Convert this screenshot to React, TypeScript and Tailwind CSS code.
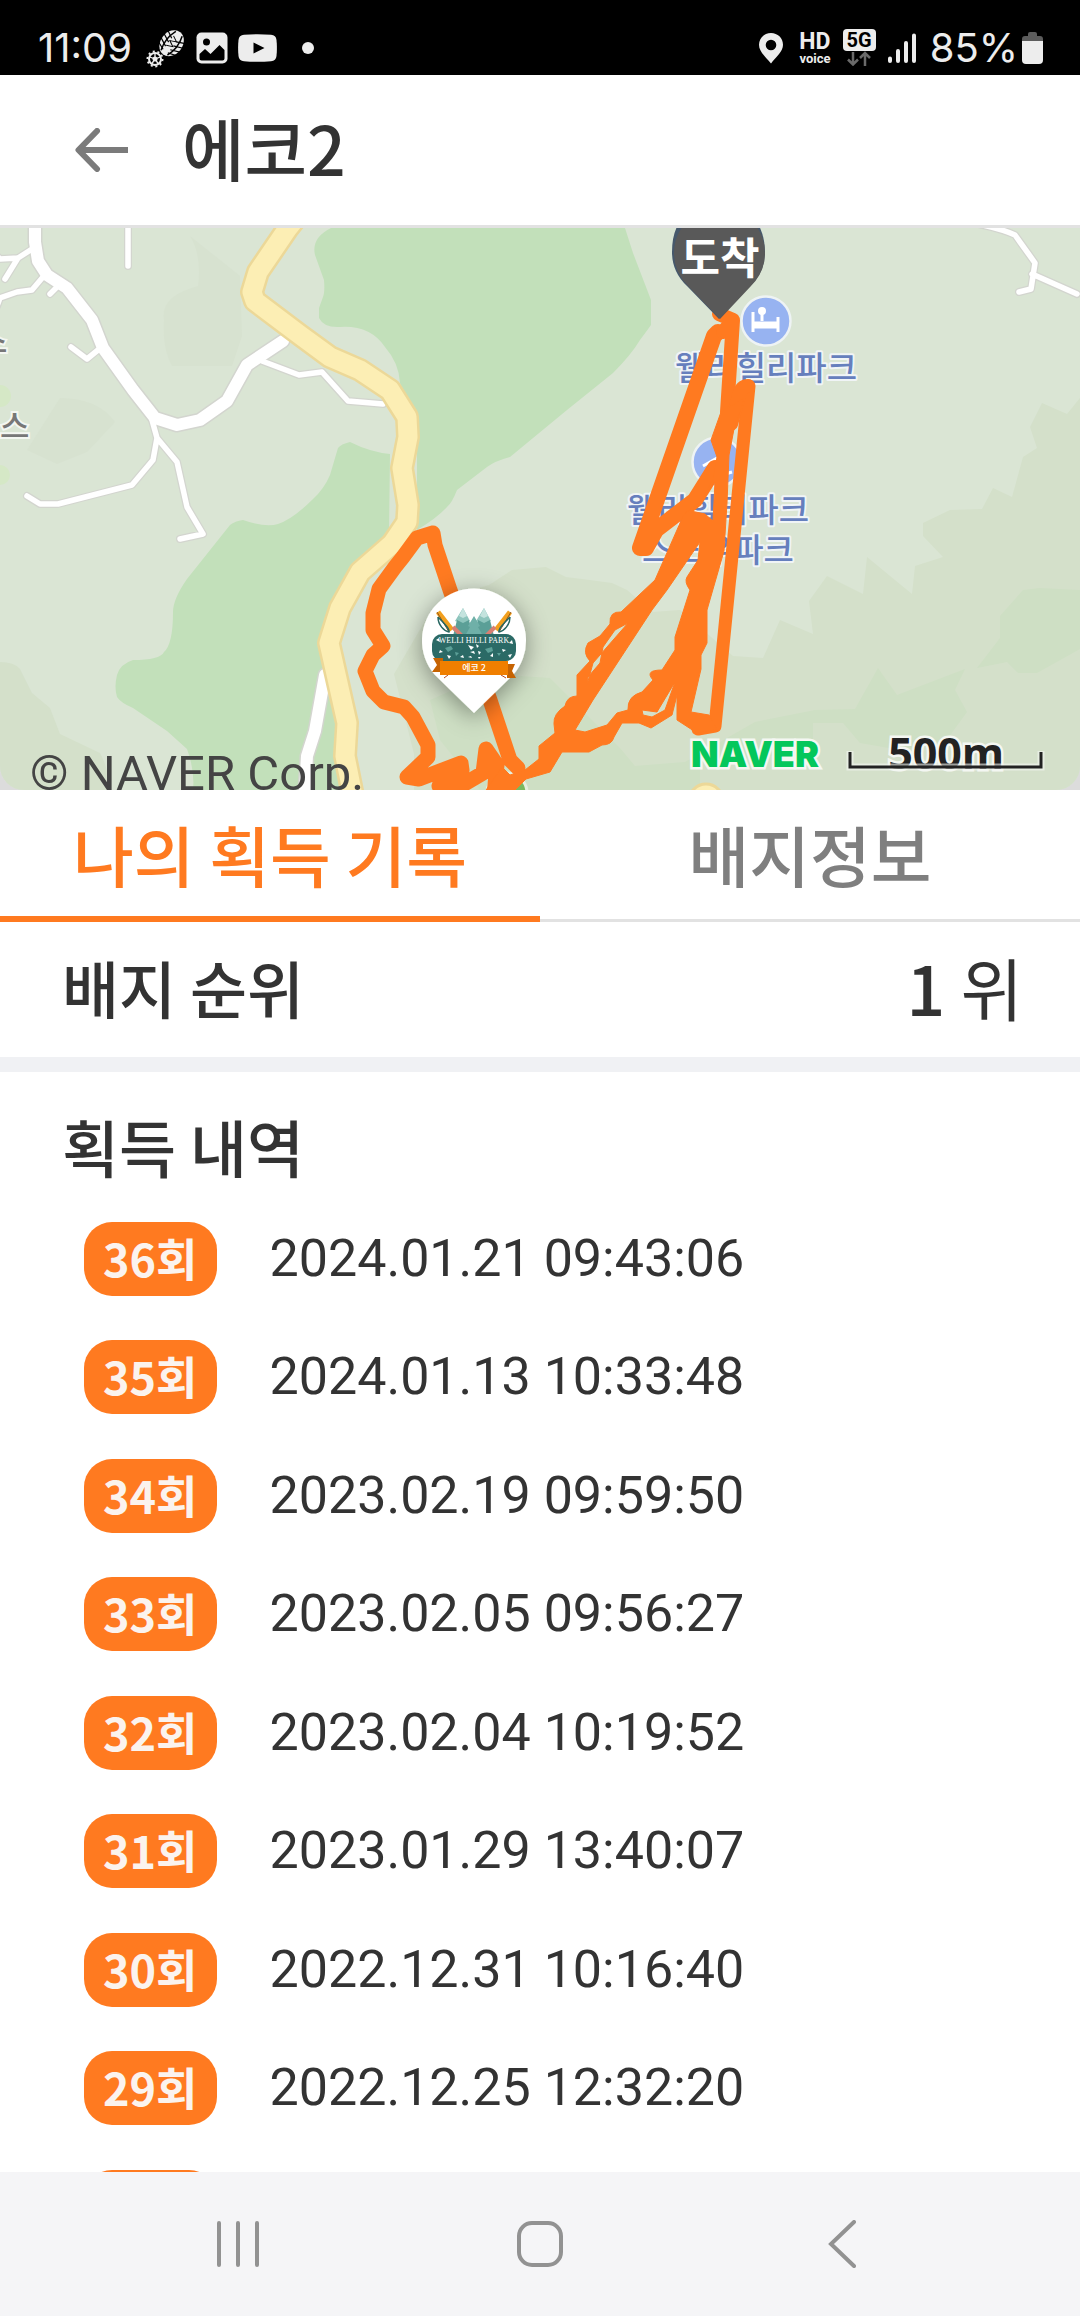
import React from 'react';

interface RecordItem {
  count: string;
  date: string;
}

const records: RecordItem[] = [
  { count: '36회', date: '2024.01.21 09:43:06' },
  { count: '35회', date: '2024.01.13 10:33:48' },
  { count: '34회', date: '2023.02.19 09:59:50' },
  { count: '33회', date: '2023.02.05 09:56:27' },
  { count: '32회', date: '2023.02.04 10:19:52' },
  { count: '31회', date: '2023.01.29 13:40:07' },
  { count: '30회', date: '2022.12.31 10:16:40' },
  { count: '29회', date: '2022.12.25 12:32:20' },
  { count: '28회', date: '' },
];

function StatusBar() {
  return (
    <div className="flex h-[75px] shrink-0 items-center justify-between bg-black pt-5 pr-[37px] pl-[38px] font-['Inter',sans-serif] text-[40px] leading-none text-[#ededed]">
      <div className="flex items-center">
        <span>11:09</span>
        {/* Shoe print and gear */}
        <svg className="ml-3.5 h-10 w-10" viewBox="0 0 40 40" fill="none">
          <g transform="rotate(38 25 16)">
            <ellipse cx="25" cy="15" rx="11" ry="14" fill="#ededed" />
            <path d="M14 7l8 4M13 12l9 4M13 17l9 4M14 22l8 3M36 7l-8 4M37 12l-9 4M37 17l-9 4M36 22l-8 3" stroke="#000" strokeWidth="1.200" />
            <path d="M21 3c-3 8-3 16 0 24M29 3c3 8 3 16 0 24" stroke="#000" strokeWidth="1.500" />
            <path d="M22 8l6 3-6 3 6 3-6 3" stroke="#000" strokeWidth="1" />
          </g>
          <circle cx="9" cy="31" r="6" stroke="#ededed" strokeWidth="2" />
          <circle cx="9" cy="31" r="7.500" stroke="#ededed" strokeWidth="2" strokeDasharray="2 2.700" />
          <circle cx="9" cy="31" r="2.500" fill="#ededed" />
          <path d="M9 25v4M3.500 29l4 1.300M5.500 36l2.500-3.500M12.500 36L10 32.500M14.500 29l-4 1.300" stroke="#ededed" strokeWidth="1.300" />
        </svg>
        {/* Gallery */}
        <svg className="ml-2.5 h-8 w-8" viewBox="0 0 32 32">
          <rect x="0.500" y="0.500" width="31" height="31" rx="5" fill="#ededed" />
          <circle cx="10.500" cy="10" r="3.500" fill="#000" />
          <path d="M3.500 22l5.500-5 5.500 5 9-9 5 5v8.500a2 2 0 0 1-2 2h-21a2 2 0 0 1-2-2z" fill="#000" />
        </svg>
        {/* Video */}
        <svg className="ml-2.5 h-7 w-[39px]" viewBox="0 0 39 28">
          <path d="M6 .8Q19.500-.5 33 .8q5 .5 5.500 5.200.8 8 0 16-.5 4.700-5.500 5.200-13.500 1.300-27 0-5-.5-5.500-5.200-.8-8 0-16Q1 1.300 6 .8z" fill="#ededed" />
          <path d="M15.500 8.500v11l11-5.500z" fill="#000" />
        </svg>
        <span className="ml-[25px] h-3 w-3 rounded-full bg-[#ededed]" />
      </div>
      <div className="flex items-center">
        <svg className="h-8 w-6" viewBox="0 0 24 32">
          <path d="M12 1C5.400 1 0 6 0 12.800 0 20 7 25 12 31.500 17 25 24 20 24 12.800 24 6 18.600 1 12 1zm0 6.700a5.300 5.300 0 1 1 0 10.600 5.300 5.300 0 0 1 0-10.600z" fill="#ededed" />
        </svg>
        <span className="ml-4 flex flex-col items-center font-['Roboto',sans-serif] font-bold">
          <span className="text-[23px] leading-[23px]">HD</span>
          <span className="text-[13px] leading-[12px]">voice</span>
        </span>
        <span className="ml-3 flex flex-col items-center font-['Roboto',sans-serif]">
          <span className="rounded-[4px] bg-[#ededed] px-1 text-[20px] leading-[22px] font-bold text-black">5G</span>
          <svg className="h-[15px] w-6" viewBox="0 0 24 15" fill="none" stroke="#6a6a6a" strokeWidth="2.500">
            <path d="M6 1v12M1 8.500l5 5 5-5M18 15V2M13 7l5-5 5 5" />
          </svg>
        </span>
        <svg className="ml-3 h-[30px] w-7" viewBox="0 0 28 30" stroke="#ededed" strokeWidth="4" strokeLinecap="round">
          <path d="M2 25.500v2.500M10 18v10M18 10v18M26 2.500v25.500" />
        </svg>
        <span className="ml-3.5">85%</span>
        <svg className="ml-1 h-8 w-[21px]" viewBox="0 0 21 32">
          <path d="M6 2q0-2 2-2h5q2 0 2 2v2h3q3 0 3 3v3H0V7q0-3 3-3h3z" fill="#5c5c5c" />
          <path d="M0 9h21v19q0 4-4 4H4q-4 0-4-4z" fill="#ededed" />
        </svg>
      </div>
    </div>
  );
}

function Header() {
  return (
    <header className="flex h-[153px] shrink-0 items-center border-b-[3px] border-[#e2e2e2] bg-white pl-[75px]">
      <button type="button" aria-label="뒤로" className="text-[#7b7b7b]">
        <svg className="h-11 w-[53px]" viewBox="0 0 53 44" fill="none" stroke="currentColor" strokeWidth="6">
          <path d="M3 22h50" />
          <path d="M22 3L3.500 22 22 41" strokeLinecap="round" strokeLinejoin="round" />
        </svg>
      </button>
      <h1 className="ml-[54px] pb-1.5 text-[68px] leading-[80px] font-medium text-[#333]">에코2</h1>
    </header>
  );
}

function CourseMarker() {
  return (
    <g>
      <path
        d="M474 713l-39-38a52 52 0 1 1 78 0z"
        fill="#fff"
        filter="url(#marker-shadow)"
      />
      {/* Trees */}
      <path d="M463 608l7 13-3 0 5 10-3 0 2 5h-17l2-5-3 0 5-9-3-1zM484 608l7 13-3 0 5 10-3 0 2 5h-17l2-5-3 0 5-9-3-1z" fill="#8ec5bd" />
      <path d="M457 620l6 3 6-3 4 16h-20zM478 620l6 3 6-3 4 16h-20z" fill="#5b9f97" />
      <path d="M463 608l4 8-4 2-4-2zM484 608l4 8-4 2-4-2z" fill="#c4e3de" />
      <path d="M474 616l6 10-2 1 5 9h-18l5-9-2-1z" fill="#6fb0a8" />
      {/* Poles */}
      <path d="M438 612l14 18M510 612l-14 18" stroke="#f2a01e" strokeWidth="5" />
      <path d="M437 612l12 20M511 612l-12 20" stroke="#96571a" strokeWidth="1" />
      <path d="M453 627l9 9M495 627l-9 9" stroke="#d77f72" strokeWidth="4" />
      <path d="M438 617c0 8 6 14 11 15 1-3-5-9-11-15M510 617c0 8-6 14-11 15-1-3 5-9 11-15" fill="none" stroke="#276660" strokeWidth="1.500" />
      {/* Snowboard */}
      <rect x="432" y="634" width="84" height="27" rx="10" fill="#2b6a66" />
      <path d="M436 640l3-2 1 4zM440 650l3 2-4 1zM447 655l4 1-2 3zM460 657l3-2 1 3zM468 645l6 2-3 3zM476 644l3 2-2 2zM470 652l4-1 1 3zM478 651l3 1-2 3zM490 656l3-3 0 4zM502 649l4 1-3 2zM509 643l3-3 1 4zM508 655l4-1-2 4zM468 657l3-1 1 2zM478 657l3 0-2 2z" fill="#fff" />
      <path d="M445 648l6-2 2 3-5 3zM485 649l7-2 1 4-5 2zM455 652l4 1-3 3zM497 653l4 0-2 3z" fill="#5b9f97" />
      <text x="474" y="643" textAnchor="middle" fontSize="8" fontFamily="Liberation Serif, serif" fill="#fff">WELLI HILLI PARK</text>
      {/* Ribbon */}
      <path d="M433 658h10v14h-11l5-7zM515 664h-8v14h9l-4-7z" fill="#c66302" />
      <path d="M444 678l4-3M501 675l5 3" stroke="#b5471e" strokeWidth="1" />
      <rect x="440" y="661" width="68" height="14" fill="#f07f00" />
      <text x="474" y="671" textAnchor="middle" fontSize="9" fontWeight="500" fill="#fff">에코 2</text>
    </g>
  );
}

function CourseMap() {
  return (
    <section aria-label="코스 지도" className="shrink-0 bg-[#dcdcdc]">
      <svg className="block h-auto w-full rounded-b-3xl" viewBox="0 228 1080 562" fontFamily="'Noto Sans CJK KR', sans-serif">
        <defs>
          <filter id="marker-shadow" x="-40%" y="-40%" width="180%" height="180%">
            <feDropShadow dx="0" dy="5" stdDeviation="12" floodColor="#000" floodOpacity="0.4" />
          </filter>
        </defs>
        <rect x="0" y="228" width="1080" height="562" fill="#dae5d4" />

        {/* Terrain */}
        <g fill="#d4e0ca">
          <path d="M0 662q14 0 20 7l12 24 18 15 10 26 40 19q8 14 10 37H0z" />
          <path d="M1080 398l-13 16-25-11-12 24 7 21-14 9-11 40-19-9-11 21-32 1-27 13v13l20 21-28 9-3 28-45-37-4 37-36-18-18 25 4 33-33-14-17 38-30-2-53-46-27 2-26-22-15-7-30-4-16-2-20-10-34 3-23 15-43 12-17 17-35 60 20 80v60h740z" />
        </g>
        <g fill="#cedfc4">
          <path d="M1080 590l-40-2-17 2-23 26v22l-23 30 30-6 11 11h19l43-24z" />
          <path d="M878 668l19 27 68-26-10 21 12 22-24 33-43 5-40-7-17-20h-30v18l-15 12-98 10v27H480l-40-50-10-40 60-26 60 4 70 70 15 18 50-4 70-40 60-12 40-1z" />
        </g>
        <path d="M190 236q12 20 8 50-38 10-34 34-2 28 8 46h60l10-30-2-60zM60 398q38 0 55 24l-28 30-30 12-30-14z" fill="#d7e2d0" />
        <circle cx="0" cy="396" r="11" fill="#d5e8c6" />
        <circle cx="0" cy="475" r="10" fill="#d5e8c6" />

        {/* Forest */}
        <g fill="#c2e0ba">
          <path d="M331 228q-20 10-16 27l9 25q1 12-1 17l-4 11v10q5 10 21 9 30-2 45 20 14 16 15 36l17 37v110q20-12 30-23 5-4 10-17l30-23q8-6 23-10l57-47 46-37q18-18 27-33 6-8 11-15v-25l-18-47-8-25z" />
          <path d="M390 454q-20-2-40-12-9 2-12 6l-8 27q-6 14-17 24-20 20-35 25-12 4-35-4-8 1-13 5l-43 54q-14 20-14 33 0 32-9 40-4 8-31 8-13 4-16 15-3 12 0 22 4 6 16 11l34 23 20 18q8 22 6 41h154v-67l-18-80 60-110z" />
        </g>

        {/* Local roads */}
        <g fill="none" strokeLinecap="round" strokeLinejoin="round">
          <g stroke="#d3d5cf">
            <path d="M35 222v20l3 19 9 14 20 13 25 32 11 28 30 42 22 28 22 7 23-5 27-19 20-36 36-24M325 675l-10 56-8 25-2 36" strokeWidth="15" />
            <path d="M-3 256l3 3 18-1 14-9M5 279l13-21M-3 306l3-8 17-6 15-2 11-13M50 294l7-7M71 347l16 12 11-9M152 420l5 18-4 22-21 25-74 19H40l-13-8M157 438l20 24 10 45 16 27-23 5M262 361l37 14 23-3 26 29 35 3M128 224v42M968 222q32 6 47 13l20 28-4 26-12 3M1032 274l45 20" strokeWidth="8" />
          </g>
          <g stroke="#fff">
            <path d="M35 222v20l3 19 9 14 20 13 25 32 11 28 30 42 22 28 22 7 23-5 27-19 20-36 36-24M325 675l-10 56-8 25-2 36" strokeWidth="12" />
            <path d="M-3 256l3 3 18-1 14-9M5 279l13-21M-3 306l3-8 17-6 15-2 11-13M50 294l7-7M71 347l16 12 11-9M152 420l5 18-4 22-21 25-74 19H40l-13-8M157 438l20 24 10 45 16 27-23 5M262 361l37 14 23-3 26 29 35 3M128 224v42M968 222q32 6 47 13l20 28-4 26-12 3M1032 274l45 20" strokeWidth="5.500" />
          </g>
        </g>

        {/* Main road */}
        <g fill="none" strokeLinejoin="round">
          <path d="M296 218l-8 10-30 44-6 20 3 9 45 34 30 22 30 13 30 20 17 27 1 20-6 31 6 37-1 17-15 22-32 28-20 36-11 35 18 80-2 33 8 40" stroke="#ecd898" strokeWidth="24" />
          <path d="M296 218l-8 10-30 44-6 20 3 9 45 34 30 22 30 13 30 20 17 27 1 20-6 31 6 37-1 17-15 22-32 28-20 36-11 35 18 80-2 33 8 40" stroke="#fceeb4" strokeWidth="19" />
          <circle cx="706" cy="801" r="17" fill="#fceeb4" stroke="#ecd898" strokeWidth="3" />
        </g>

        {/* Place labels */}
        <g fill="#777" stroke="#f3f6f1" strokeWidth="4" paintOrder="stroke" fontSize="32" fontWeight="500">
          <text x="-22" y="353">스</text>
          <text x="0" y="438">스</text>
        </g>
        <g stroke="#eef3f4" strokeWidth="2.500">
          <circle cx="766" cy="321" r="24.500" fill="#97b3f1" />
          <circle cx="717" cy="462" r="24.500" fill="#97b3f1" />
        </g>
        <g fill="none" stroke="#fff" strokeWidth="3">
          <path d="M753 312v20M778 317v15" />
          <path d="M753 325h26" strokeWidth="7" />
          <circle cx="762" cy="311" r="2.500" fill="#fff" />
          <path d="M762 313v8M703 466l14-8M722 475l10-3" />
        </g>
        <g fill="#667fbd" stroke="#f0f4f6" strokeWidth="4" strokeLinejoin="round" paintOrder="stroke" fontSize="33" fontWeight="500" textAnchor="middle">
          <text x="766" y="380">웰리힐리파크</text>
          <text x="718" y="522">웰리힐리파크</text>
          <text x="718" y="562">스노우파크</text>
        </g>

        {/* Tracked route */}
        <circle cx="507" cy="793" r="20" fill="#7ab85f" stroke="#e6efdf" strokeWidth="3" />
        <g fill="none" stroke="#ff7a20" strokeWidth="13" strokeLinecap="round" strokeLinejoin="round">
          <path d="M518 768l-8-8-20-60-40-110-15-45-2-12-16 5-14 19-8 10-16 22-6 24v17l10 16-10 9-8 16 8 20 11 11 20 5 9 10 15 28v12l-21 20 12 2 42-16 1 7-23 16 6 6 16-6 22-13 3-24 11 16-3 30" strokeWidth="15" />
          <path d="M718 332l-4 4-74 212h6l10-18 39-30 20-32" strokeWidth="16" />
          <path d="M733 320l-6 92M719 314l14 6-10 12" strokeWidth="14" />
          <path d="M749 386l-34 340-17 3" />
          <path d="M748 386q-7 0-9 10l-8 28" strokeWidth="14" />
        </g>
        <path
          fill="#ff7a20"
          fillRule="evenodd"
          stroke="#ff7a20"
          strokeWidth="1"
          strokeLinejoin="round"
          d="M721 412l-10 28 6 17-4 22-12 22-17 13-29 66-34 32q-12-1-11 12l-10 12-12 7q-6 10 2 18l-13 14v21q-10 0-12 10-12 8-11 18l1 9-16 13v13l-14 11-15 5-8-8-18 26h28l14-14 24-7 12-20h27l13-7q10 0 12-8l8-14h17l12 5 21-13 5-20v25l20 13 20-4-8-14-18-3 10-43v-14l6-12v-33l17-59 3-48 2-48 5-26 7-20 3-11z
          M628 623l-35 40-6 22 1-8 12-14 3-16 12-17z
          M700 542l-33 48-15 20-59 90-18 30 10 2 22-7 10-12 11-3q-1-14 14-18l11-12q-9-10 9-10l13-20v-13l15-47q-6-8-3-13l11-17z
          M675 682l-18 30-15-2 1 5 9 2 13-7z
          M715 481l-15 22-9 8 14 3 8 7z"
        />

        <path d="M719 319l-32-33q-15-14-15-34 0-46 46-46 46 0 47 46 0 20-15 34z" fill="#46586b" />
        <path d="M720 319l-32-33q-14-14-14-33a45 45 0 0 1 91 0q0 19-14 33z" fill="#595959" />
        <text x="720" y="274" fontSize="43" fontWeight="700" fill="#fff" textAnchor="middle">도착</text>

        <CourseMarker />

        <text x="30" y="790" fontSize="49" fontFamily="Roboto, sans-serif" fill="#444">© NAVER Corp.</text>
        <text x="755" y="767" fontSize="36" fontWeight="900" fontFamily="Inter, sans-serif" fill="#04c75b" stroke="#f4f7f2" strokeWidth="5" paintOrder="stroke" textAnchor="middle">NAVER</text>
        <text x="946" y="769" fontSize="43" fontWeight="700" fontFamily="'Noto Sans', sans-serif" fill="#222" stroke="#f4f7f2" strokeWidth="5" paintOrder="stroke" textAnchor="middle">500m</text>
        <path d="M850 751v16h191v-16" fill="none" stroke="#f4f7f2" strokeWidth="7" strokeOpacity="0.600" />
        <path d="M850 752v15h191v-15" fill="none" stroke="#222" strokeWidth="3" />
      </svg>
    </section>
  );
}

function Tabs() {
  return (
    <div role="tablist" className="grid h-[132px] shrink-0 grid-cols-2 text-[66px] leading-[80px] font-medium">
      <button type="button" role="tab" aria-selected="true" className="border-b-[6px] border-[#ff7a20] text-[#ff7a20]">
        나의 획득 기록
      </button>
      <button type="button" role="tab" aria-selected="false" className="border-b-[3px] border-[#e2e2e2] pb-[3px] text-[#7f7f7f]">
        배지정보
      </button>
    </div>
  );
}

function RecordRow({ count, date }: RecordItem) {
  return (
    <li className="mb-11 flex items-center gap-[53px] even:mb-[45px]">
      <span className="rounded-[28px] bg-[#ff7a20] px-[19px] pb-0.5 text-[45px] leading-[72px] font-bold text-[#fbf3ee]">{count}</span>
      <span className="font-['Roboto',sans-serif] text-[52px] leading-[74px] text-[#333]">{date}</span>
    </li>
  );
}

function NavigationBar() {
  return (
    <nav className="grid h-36 shrink-0 grid-cols-3 bg-[#f5f5f7] px-[87px] text-[#929292]">
      <button type="button" aria-label="최근 앱" className="flex items-center justify-center">
        <svg className="h-12 w-12" viewBox="0 0 48 48" stroke="currentColor" strokeWidth="4" strokeLinecap="round">
          <path d="M5 3v42M24 3v42M43 3v42" />
        </svg>
      </button>
      <button type="button" aria-label="홈" className="flex items-center justify-center">
        <svg className="h-12 w-12" viewBox="0 0 48 48" fill="none" stroke="currentColor" strokeWidth="4">
          <rect x="3" y="3" width="42" height="42" rx="13" />
        </svg>
      </button>
      <button type="button" aria-label="뒤로 가기" className="flex items-center justify-center">
        <svg className="h-12 w-12" viewBox="0 0 48 48" fill="none" stroke="currentColor" strokeWidth="4" strokeLinecap="round">
          <path d="M36 2L13 24l23 22" />
        </svg>
      </button>
    </nav>
  );
}

export default function App() {
  return (
    <div className="flex h-screen flex-col overflow-hidden bg-white font-['Noto_Sans_CJK_KR',sans-serif] text-[#333]">
      <StatusBar />
      <Header />
      <CourseMap />
      <Tabs />

      {/* Badge rank */}
      <section className="flex h-[150px] shrink-0 items-center justify-between border-b-[15px] border-[#f0f1f4] pr-[57px] pb-1.5 pl-[62px]">
        <h2 className="text-[62px] leading-[80px] font-medium">배지 순위</h2>
        <p className="text-[68px] leading-[80px]">
          <span className="font-medium">1</span> 위
        </p>
      </section>

      {/* Acquired records */}
      <section className="flex min-h-0 flex-1 flex-col overflow-hidden pt-[34px]">
        <h2 className="px-[62px] text-[62px] leading-[80px] font-medium">획득 내역</h2>
        <ul className="mt-9 pl-[84px]">
          {records.map((record) => (
            <RecordRow key={record.count} {...record} />
          ))}
        </ul>
      </section>

      <NavigationBar />
    </div>
  );
}
